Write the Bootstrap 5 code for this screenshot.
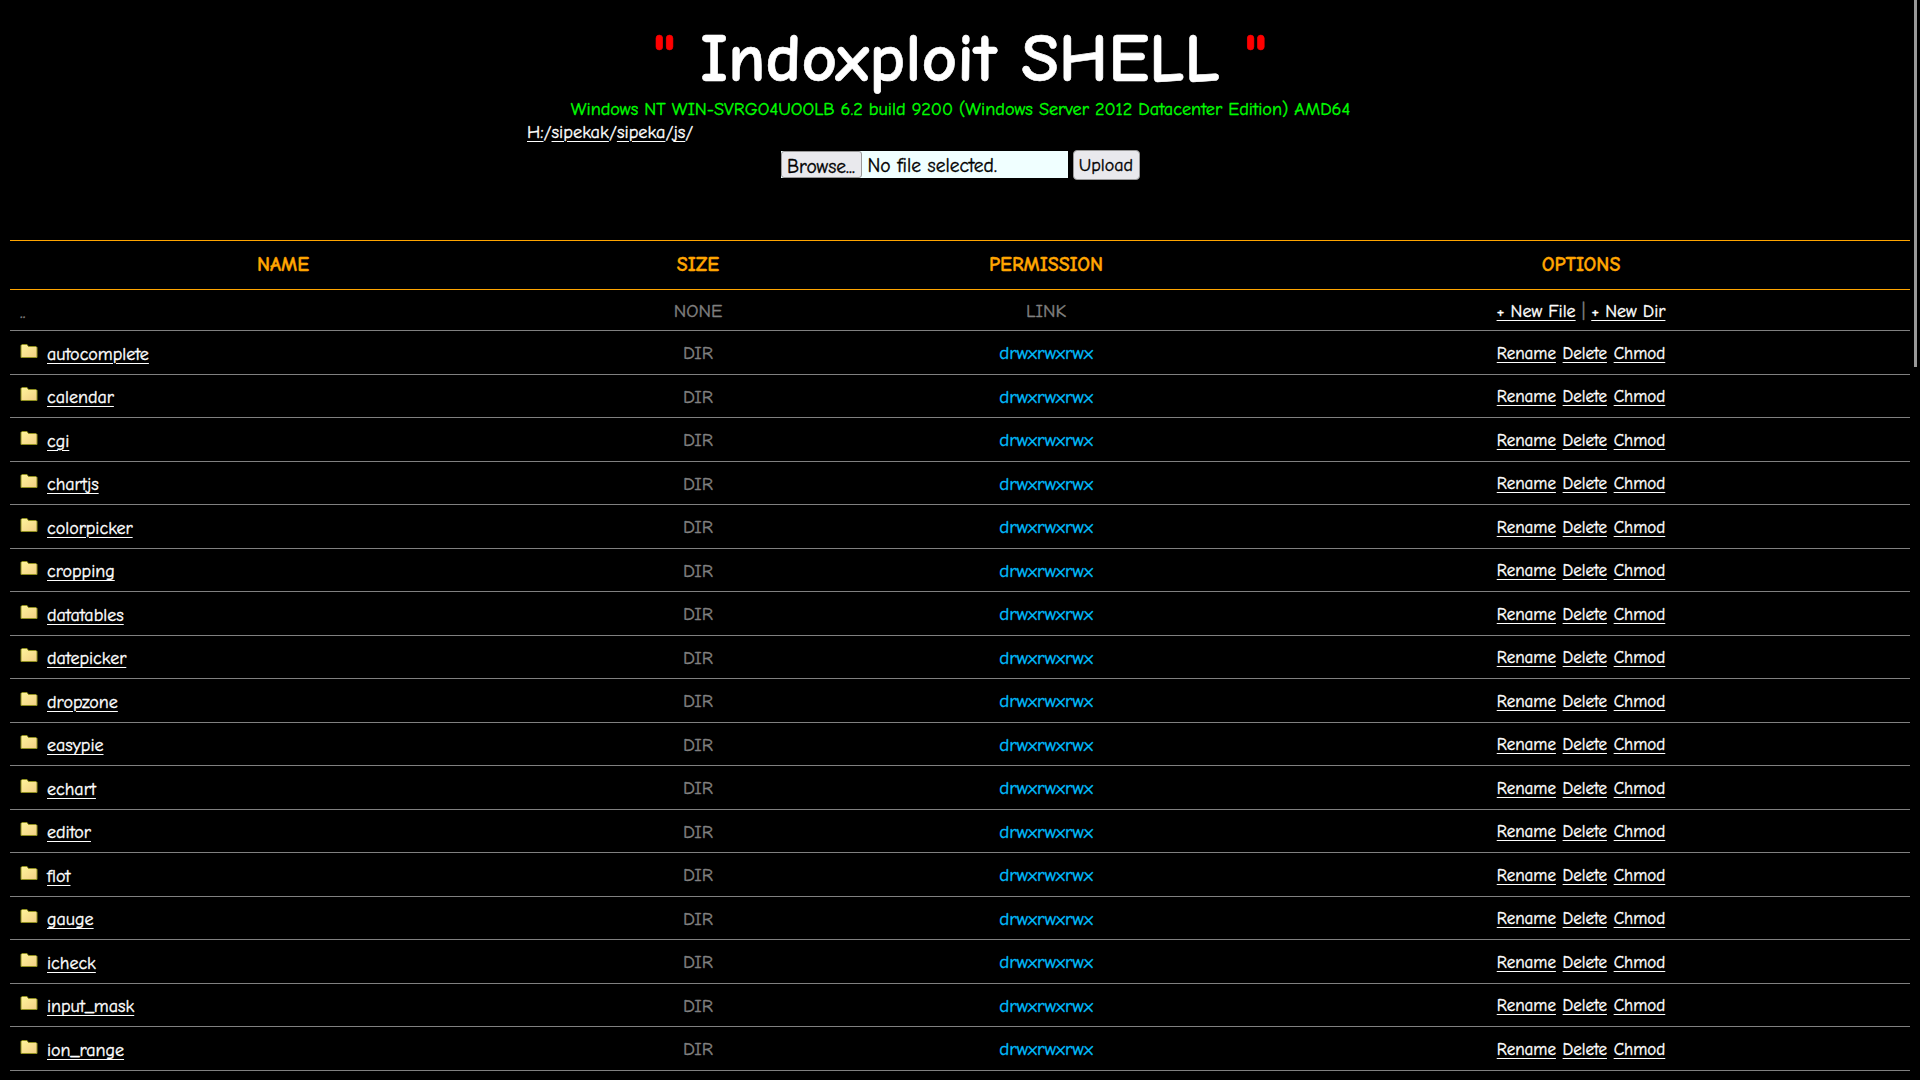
<!DOCTYPE html>
<html lang="en">
<head>
    <meta charset="UTF-8">
    <meta name="viewport" content="width=device-width, initial-scale=1.0">
    <title>Indoxploit SHELL</title>
    <link rel="stylesheet" href="https://cdn.jsdelivr.net/npm/bootstrap@5.3.0/dist/css/bootstrap.min.css">
    <style>
        html, body {
            height: 1080px;
            overflow: hidden;
        }
        body {
            background: #000;
            color: #fff;
            font-family: "Comic Sans MS", "Comic Neue", "Noto Sans", sans-serif;
            font-size: 18px;
            padding: 0 10px;
            -webkit-text-stroke: 0.35px currentColor;
        }
        a { color: #fff; text-decoration-thickness: 1px; text-underline-offset: 3px; }
        .shell-title {
            font-size: 69px;
            line-height: 74px;
            font-weight: 700;
            text-align: center;
            margin: 22px 0 2px;
            -webkit-text-stroke: 0.6px currentColor;
        }
        .shell-quote { color: #f00; font-weight: 700; }
        .shell-uname {
            color: #0f0;
            font-size: 18.2px;
            text-align: center;
            line-height: 23px;
            padding-left: 1px;
        }
        .shell-path {
            width: 866px;
            margin: 0 auto;
            line-height: 23px;
            font-size: 18.3px;
            color: #fff;
        }
        .shell-upload {
            height: 96px;
            padding-top: 7px;
        }
        .shell-file {
            display: inline-flex;
            background: #f0ffff;
            color: #000;
            width: 287px;
            height: 27px;
            align-items: center;
            font-size: 19.5px;
        }
        .shell-file-none { padding: 2px 0 0 1px; }
        .shell-browse {
            height: 27px;
            width: 81px;
            margin-right: 5px;
            padding: 0;
            border: 1px solid #999;
            border-radius: 3px;
            background: #e9e9ed;
            color: #000;
        }
        .shell-submit {
            height: 30px;
            width: 67px;
            padding: 0;
            margin-top: -1px;
            margin-left: 5px;
            border: 1px solid #999;
            border-radius: 4px;
            background: #e9e9ed;
            color: #000;
        }
        .shell-table {
            width: 1900px;
            table-layout: fixed;
            border-collapse: collapse;
        }
        .shell-table th {
            color: orange;
            font-size: 20px;
            font-weight: 700;
            height: 49px;
            padding-top: 1px;
            text-align: center;
            border-top: 1px solid orange;
            border-bottom: 1px solid orange;
            -webkit-text-stroke: 0.3px currentColor;
        }
        .shell-table td {
            height: 43.53px;
            padding: 2px 0 0;
            border-bottom: 1px solid #808080;
            color: #808080;
            font-size: 19px;
            text-align: center;
            vertical-align: middle;
        }
        .shell-table tr.shell-up td { height: 41px; }
        .shell-table td.shell-name { text-align: left; padding: 4px 0 0 10px; font-size: 18px; }
        .shell-table td.shell-opts { font-size: 17px; word-spacing: 1px; }
        .shell-table tr.shell-up td.shell-opts { font-size: 18px; word-spacing: 0; }
        .shell-perm { color: #00bfff !important; }
        .shell-folder { vertical-align: 1px; margin-right: 9px; }
        .shell-scroll {
            position: fixed;
            top: 0;
            right: 3px;
            width: 3px;
            height: 367px;
            background: #999;
        }
    </style>
</head>
<body>
    <h1 class="shell-title"><span class="shell-quote">"</span> Indoxploit SHELL <span class="shell-quote">"</span></h1>
    <div class="shell-uname">Windows NT WIN-SVRGO4UOOLB 6.2 build 9200 (Windows Server 2012 Datacenter Edition) AMD64</div>
    <div class="shell-path"><a href="#">H:</a>/<a href="#">sipekak</a>/<a href="#">sipeka</a>/<a href="#">js</a>/</div>
    <form class="shell-upload d-flex justify-content-center align-items-start">
        <span class="shell-file"><button type="button" class="shell-browse">Browse...</button><span class="shell-file-none">No file selected.</span></span>
        <button type="button" class="shell-submit">Upload</button>
    </form>
    <table class="shell-table">
        <colgroup>
            <col style="width:546px"><col style="width:284px"><col style="width:412px"><col style="width:658px">
        </colgroup>
        <thead>
            <tr><th>NAME</th><th>SIZE</th><th>PERMISSION</th><th>OPTIONS</th></tr>
        </thead>
        <tbody id="files">
            <tr class="shell-up">
                <td class="shell-name">..</td><td>NONE</td><td>LINK</td>
                <td class="shell-opts"><a href="#">+ New File</a> | <a href="#">+ New Dir</a></td>
            </tr>
        </tbody>
    </table>
    <div class="shell-scroll"></div>

    <script>
        const pastas = ["autocomplete", "calendar", "cgi", "chartjs", "colorpicker", "cropping", "datatables",
            "datepicker", "dropzone", "easypie", "echart", "editor", "flot", "gauge", "icheck", "input_mask", "ion_range"];
        const files = document.getElementById("files");
        pastas.forEach(nome => {
            const tr = document.createElement("tr");
            tr.innerHTML = `
                <td class="shell-name"><svg class="shell-folder" width="18" height="16" viewBox="0 0 18 16"><defs><linearGradient id="g" x1="0" y1="0" x2="1" y2="1"><stop offset="0" stop-color="#fff49a"/><stop offset="1" stop-color="#f2cf86"/></linearGradient></defs><path d="M1 14.5V2.5L2 1.5H7L8.5 3.5H16L17 4.5V14.5Z" fill="url(#g)" stroke="#8f8f1f"/></svg><a href="#">${nome}</a></td>
                <td>DIR</td>
                <td class="shell-perm">drwxrwxrwx</td>
                <td class="shell-opts"><a href="#">Rename</a> <a href="#">Delete</a> <a href="#">Chmod</a></td>
            `;
            files.appendChild(tr);
        });
    </script>
    <script src="https://cdn.jsdelivr.net/npm/bootstrap@5.3.0/dist/js/bootstrap.bundle.min.js"></script>
</body>
</html>
